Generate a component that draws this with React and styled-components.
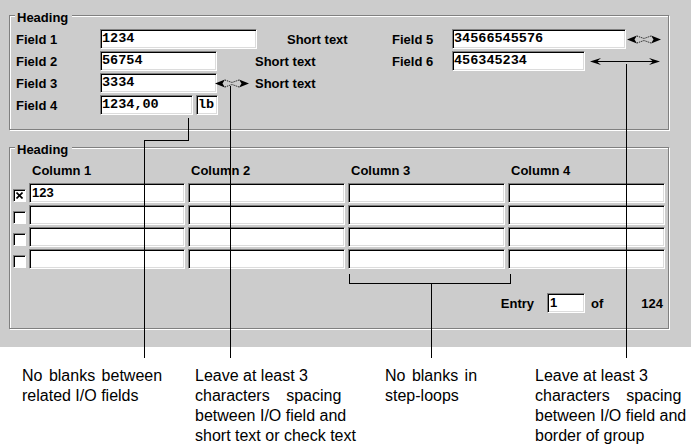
import React from 'react';
import styled, { createGlobalStyle } from 'styled-components';

const GlobalStyle = createGlobalStyle`
  html, body { margin: 0; padding: 0; background: #fff; }
`;

const GRAY = '#cccccc';

const Page = styled.div`
  position: relative;
  width: 691px;
  height: 445px;
  overflow: hidden;
  background: #fff;
  font-family: "Liberation Sans", Arial, sans-serif;
`;

const Screen = styled.div`
  background: ${GRAY};
  height: 347px;
  box-sizing: border-box;
  padding: 15px 22px 0 9px;
  display: flex;
  flex-direction: column;
  gap: 17px;
`;

const Group = styled.div`
  display: flex;
  flex-direction: column;
  border: 1px solid #808080;
  box-shadow: inset 1px 1px 0 #fff, 1px 1px 0 #fff;
  padding: 0 5px ${p => p.$pb}px 0;
`;

const Legend = styled.div`
  align-self: flex-start;
  margin: -6px 0 0 5px;
  padding: 0 4px 0 2px;
  background: ${GRAY};
  font-weight: bold;
  font-size: 13px;
  line-height: 15px;
  color: #000;
`;

const FieldGrid = styled.div`
  display: grid;
  grid-template-columns: 84px 292px 60px 1fr;
  grid-auto-rows: 20px;
  row-gap: 2px;
  margin-top: 4px;
  padding-left: 6px;
  align-items: center;
`;

const Label = styled.span`
  font-weight: bold;
  font-size: 13px;
  line-height: 15px;
  color: #000;
  white-space: nowrap;
  margin-left: ${p => p.$ml || 0}px;
`;

const Cell = styled.div`
  display: flex;
  align-items: center;
  height: 20px;
`;

const Field = styled.div`
  width: ${p => p.$w}px;
  height: 20px;
  box-sizing: border-box;
  flex: none;
  margin-left: ${p => p.$ml || 0}px;
  background: #fff;
  border-top: 1px solid #808080;
  border-left: 1px solid #808080;
  border-bottom: 1px solid #fff;
  border-right: 1px solid #fff;
  box-shadow: inset 1px 1px 0 #000, inset -1px -1px 0 #dcdcdc;
  padding-left: ${p => (p.$mono ? 1 : 2)}px;
  font-family: ${p => (p.$mono ? '"Liberation Mono", "DejaVu Sans Mono", monospace' : '"Liberation Sans", Arial, sans-serif')};
  font-size: ${p => (p.$mono ? '13.5px' : '13px')};
  font-weight: bold;
  line-height: 18px;
  color: #000;
  white-space: nowrap;
  overflow: hidden;
`;

const ArrowBox = styled.svg`
  flex: none;
  display: block;
  margin-left: ${p => p.$ml || 0}px;
`;

const SmallArrow = ({ ml }) => (
  <ArrowBox $ml={ml} width="34" height="11" viewBox="0 0 34 11">
    <polygon points="0,5.5 10,1.5 7.5,5.5 10,9.5" fill="#000" />
    <polygon points="34,5.5 24,1.5 26.5,5.5 24,9.5" fill="#000" />
    <path d="M10 2 L17 4.5 L24 2 M10 9 L17 6.5 L24 9" stroke="#000" strokeWidth="1" strokeDasharray="1 1" fill="none" />
  </ArrowBox>
);

const LongArrow = ({ ml }) => (
  <ArrowBox $ml={ml} width="70" height="11" viewBox="0 0 70 11">
    <line x1="3" y1="5.5" x2="67" y2="5.5" stroke="#000" strokeWidth="1" />
    <polygon points="0,5.5 11,2 7,5.5 11,9" fill="#000" />
    <polygon points="70,5.5 59,2 63,5.5 59,9" fill="#000" />
  </ArrowBox>
);

const StepLoop = styled.div`
  display: grid;
  grid-template-columns: 13px 156px 157px 157px 157px;
  column-gap: 3px;
  row-gap: 2px;
  margin-top: 6px;
  padding-left: 3px;
`;

const ColHead = styled.div`
  font-weight: bold;
  font-size: 13px;
  line-height: 16px;
  padding-left: 3px;
  margin-bottom: 2px;
  color: #000;
`;

const Check = styled.div`
  align-self: end;
  margin-bottom: 1px;
  width: 13px;
  height: 13px;
  box-sizing: border-box;
  background: #fff;
  border-top: 1px solid #808080;
  border-left: 1px solid #808080;
  border-bottom: 1px solid #fff;
  border-right: 1px solid #fff;
  box-shadow: inset 1px 1px 0 #000;
  display: flex;
  align-items: center;
  justify-content: center;
`;

const EntryRow = styled.div`
  display: flex;
  justify-content: flex-end;
  align-items: center;
  margin-top: 24px;
`;

const Notes = styled.div`
  display: grid;
  grid-template-columns: 173px 190px 150px 1fr;
  padding: 19px 0 0 22px;
  font-family: "Liberation Sans", Arial, sans-serif;
  font-size: 16px;
  line-height: 20px;
  color: #000;
`;

const NoteLine = styled.div`
  white-space: nowrap;
  word-spacing: ${p => p.$ws || 0}px;
`;

const Leaders = styled.svg`
  position: absolute;
  top: 0;
  left: 0;
  pointer-events: none;
`;

const rows = [
  ['123', true],
  ['', false],
  ['', false],
  ['', false],
];

const notes = [
  [['No blanks between', 2], ['related I/O fields', 0]],
  [['Leave at least 3', 0], ['characters spacing', 12], ['between I/O field and', 0], ['short text or check text', 0]],
  [['No blanks in', 2], ['step-loops', 0]],
  [['Leave at least 3', 0], ['characters spacing', 12], ['between I/O field and', 0], ['border of group', 0]],
];

export default function App() {
  return (
    <Page>
      <GlobalStyle />
      <Screen>
        <Group $pb={14}>
          <Legend>Heading</Legend>
          <FieldGrid>
            <Label>Field 1</Label>
            <Cell>
              <Field $w={157} $mono>1234</Field>
              <Label $ml={30}>Short text</Label>
            </Cell>
            <Label>Field 5</Label>
            <Cell>
              <Field $w={174} $mono>34566545576</Field>
              <SmallArrow ml={1} />
            </Cell>

            <Label>Field 2</Label>
            <Cell>
              <Field $w={117} $mono>56754</Field>
              <Label $ml={38}>Short text</Label>
            </Cell>
            <Label>Field 6</Label>
            <Cell>
              <Field $w={133} $mono>456345234</Field>
              <LongArrow ml={5} />
            </Cell>

            <Label>Field 3</Label>
            <Cell>
              <Field $w={117} $mono>3334</Field>
              <SmallArrow ml={-2} />
              <Label $ml={6}>Short text</Label>
            </Cell>
            <span />
            <span />

            <Label>Field 4</Label>
            <Cell>
              <Field $w={93} $mono>1234,00</Field>
              <Field $w={22} $ml={3} $mono>lb</Field>
            </Cell>
          </FieldGrid>
        </Group>

        <Group $pb={15}>
          <Legend>Heading</Legend>
          <StepLoop>
            <span />
            <ColHead>Column 1</ColHead>
            <ColHead>Column 2</ColHead>
            <ColHead>Column 3</ColHead>
            <ColHead>Column 4</ColHead>
            {rows.map(([value, checked], i) => (
              <React.Fragment key={i}>
                <Check>
                  {checked && (
                    <svg width="7" height="7" viewBox="0 0 7 7">
                      <path d="M0.5 0.5 L6.5 6.5 M6.5 0.5 L0.5 6.5" stroke="#000" strokeWidth="1.6" />
                    </svg>
                  )}
                </Check>
                <Field $w={156}>{value}</Field>
                <Field $w={157} />
                <Field $w={157} />
                <Field $w={157} />
              </React.Fragment>
            ))}
          </StepLoop>
          <EntryRow>
            <Label>Entry</Label>
            <Field $w={38} $ml={13}>1</Field>
            <Label $ml={6}>of</Label>
            <Label $ml={38}>124</Label>
          </EntryRow>
        </Group>
      </Screen>

      <Notes>
        {notes.map((lines, i) => (
          <div key={i}>
            {lines.map(([text, ws], j) => (
              <NoteLine key={j} $ws={ws}>{text}</NoteLine>
            ))}
          </div>
        ))}
      </Notes>

      <Leaders width="691" height="445" viewBox="0 0 691 445" shapeRendering="crispEdges">
        <g stroke="#000" strokeWidth="1" fill="none">
          <polyline points="188.5,118 188.5,140.5 144.5,140.5 144.5,358" />
          <line x1="230.5" y1="86" x2="230.5" y2="358" />
          <line x1="626.5" y1="64" x2="626.5" y2="358" />
          <polyline points="349.5,274 349.5,283.5 510.5,283.5 510.5,274" />
          <line x1="431.5" y1="283.5" x2="431.5" y2="358" />
        </g>
      </Leaders>
    </Page>
  );
}
